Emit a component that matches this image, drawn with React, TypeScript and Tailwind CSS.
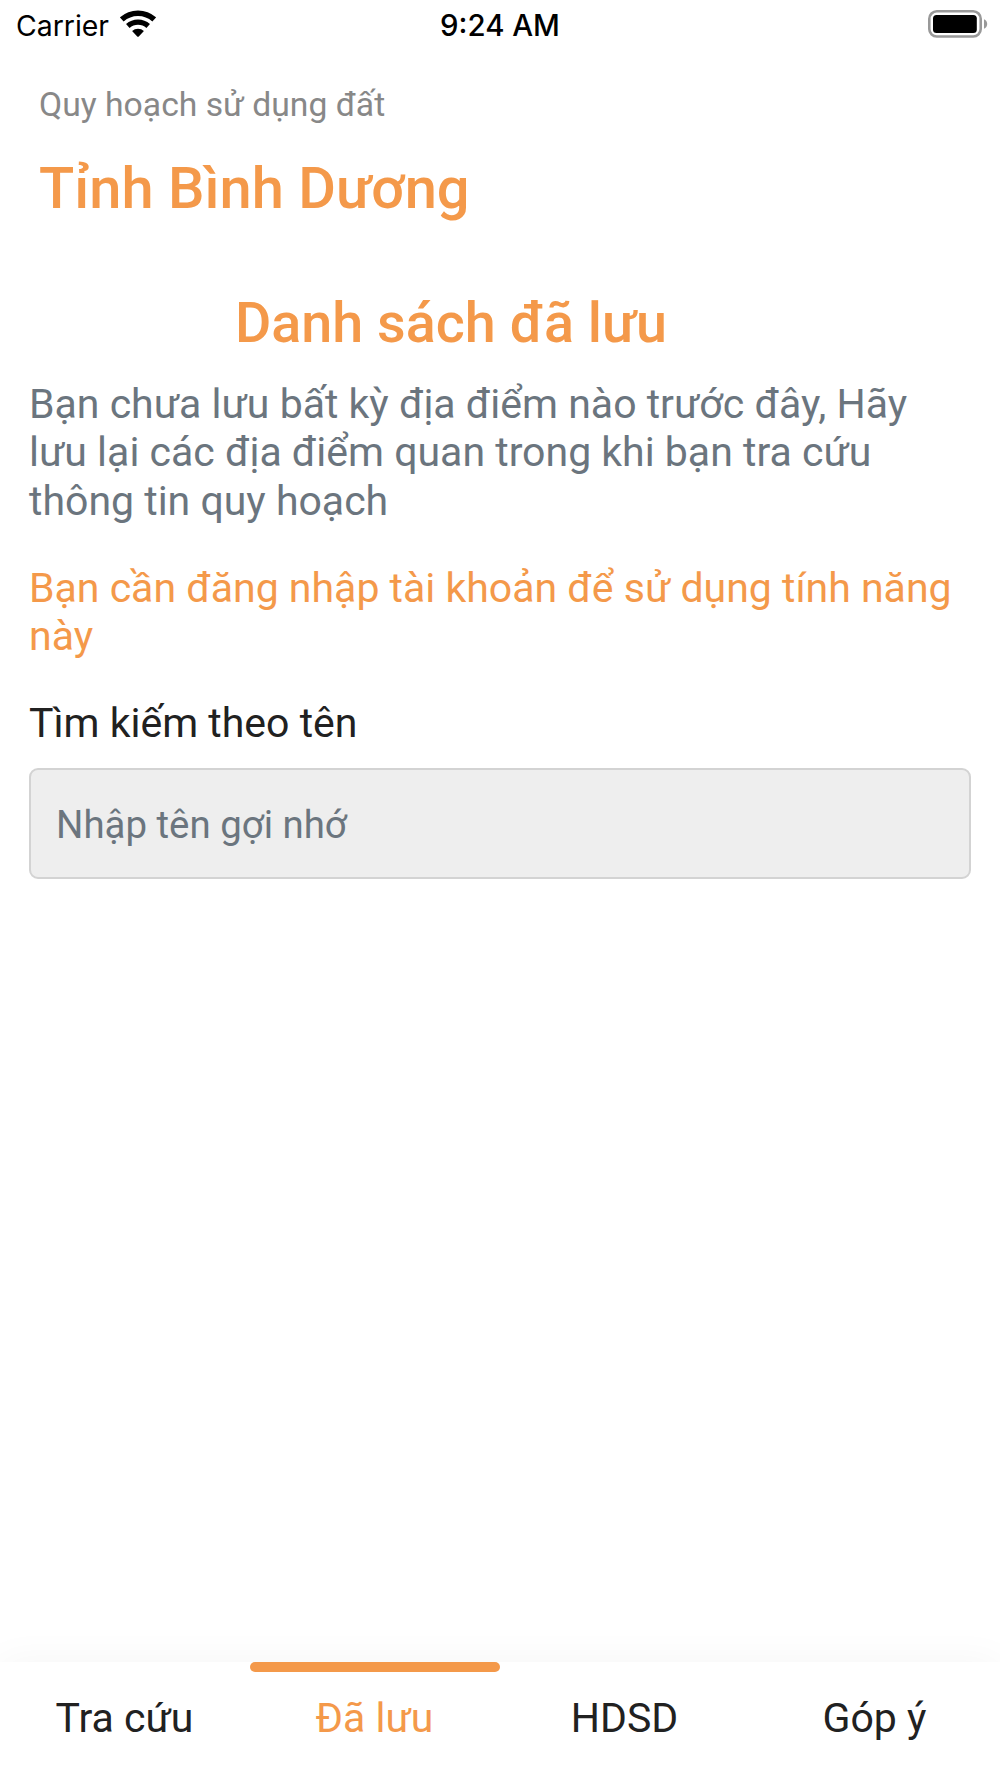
import React, { useState } from 'react'

interface Tab {
  id: string
  label: string
}

const tabs: Tab[] = [
  { id: 'search', label: 'Tra cứu' },
  { id: 'saved', label: 'Đã lưu' },
  { id: 'guide', label: 'HDSD' },
  { id: 'feedback', label: 'Góp ý' }
]

const WifiIcon = () => (
  <svg className="w-9 h-7" viewBox="0 0 36 28" fill="none">
    <path d="M1.8 9.4a24.2 24.2 0 0 1 32.4 0" stroke="#000" strokeWidth="5.5" />
    <path d="M7.8 16a15.3 15.3 0 0 1 20.4 0" stroke="#000" strokeWidth="5.3" />
    <path d="M12.1 20.9a8.8 8.8 0 0 1 11.8 0L18.8 26.4q-.8.8-1.6 0z" fill="#000" />
  </svg>
)

const BatteryIcon = () => (
  <svg className="w-[60px] h-7" viewBox="0 0 60 28" fill="none">
    <rect x="1.3" y="1.3" width="51.4" height="25.2" rx="7.5" stroke="#999" strokeWidth="2.6" />
    <rect x="5" y="5" width="43.8" height="18" rx="3.5" fill="#000" />
    <path d="M56 9.2c1.9.8 3.2 2.6 3.2 4.8s-1.3 4-3.2 4.8z" fill="#999" />
  </svg>
)

const StatusBar = () => (
  <div className="flex items-center h-12 pl-4 pr-3 font-['Inter',sans-serif] text-black">
    <div className="flex flex-1 items-center gap-[11px]">
      <span className="pt-[5px] text-[28.4px] leading-none">Carrier</span>
      <WifiIcon />
    </div>
    <span className="pt-1 pr-1 text-[29.4px] leading-none font-medium">9:24 AM</span>
    <div className="flex flex-1 justify-end">
      <BatteryIcon />
    </div>
  </div>
)

const App: React.FC = () => {
  const [activeTab, setActiveTab] = useState('saved')
  const [name, setName] = useState('')

  return (
    <div className="flex flex-col w-[1000px] h-[1778px] overflow-hidden bg-white font-['Roboto',sans-serif]">
      <StatusBar />

      {/* Header */}
      <header className="flex flex-col gap-[29px] pt-[37px] pl-[39px]">
        <p className="text-[33.7px] leading-10 text-[#888]">Quy hoạch sử dụng đất</p>
        <h1 className="text-[57.8px] leading-[68px] font-medium text-[#f4994a]">Tỉnh Bình Dương</h1>
      </header>

      {/* Saved places */}
      <main className="flex-1 pt-[68px] px-[29px] text-[41px] leading-[48.33px]">
        <h2 className="pr-[98px] text-center text-[55.7px] leading-[66px] font-medium text-[#f4994a]">
          Danh sách đã lưu
        </h2>
        <p className="mt-6 text-[#6b757e]">
          Bạn chưa lưu bất kỳ địa điểm nào trước đây, Hãy lưu lại các địa điểm quan trong khi bạn tra cứu thông tin quy hoạch
        </p>
        <p className="mt-[39px] text-[#f4994a]">
          Bạn cần đăng nhập tài khoản để sử dụng tính năng này
        </p>
        <label htmlFor="place-name" className="block mt-[38px] text-[#212121]">Tìm kiếm theo tên</label>
        <input
          id="place-name"
          className="block mt-[21px] w-full h-[111px] px-[25px] pt-0.5 rounded-[9px] border-2 border-[#d3d3d3] bg-[#eee] text-[38.4px] text-[#212121] placeholder:text-[#6b757e] outline-none"
          placeholder="Nhập tên gợi nhớ"
          value={name}
          onChange={e => setName(e.target.value)}
        />
      </main>

      {/* Bottom tabs */}
      <nav className="grid grid-cols-4 h-[116px] bg-white shadow-[0_0_40px_rgba(0,0,0,0.045)]">
        {tabs.map(tab => (
          <button
            key={tab.id}
            className={`flex flex-col items-center text-[41px] leading-[48px] ${
              activeTab === tab.id ? 'text-[#f4994a]' : 'text-[#212121]'
            }`}
            onClick={() => setActiveTab(tab.id)}
          >
            <span className={`w-full h-2.5 mb-[22px] rounded-full ${activeTab === tab.id ? 'bg-[#f4994a]' : ''}`} />
            <span className="pr-px">{tab.label}</span>
          </button>
        ))}
      </nav>
    </div>
  )
}

export default App
